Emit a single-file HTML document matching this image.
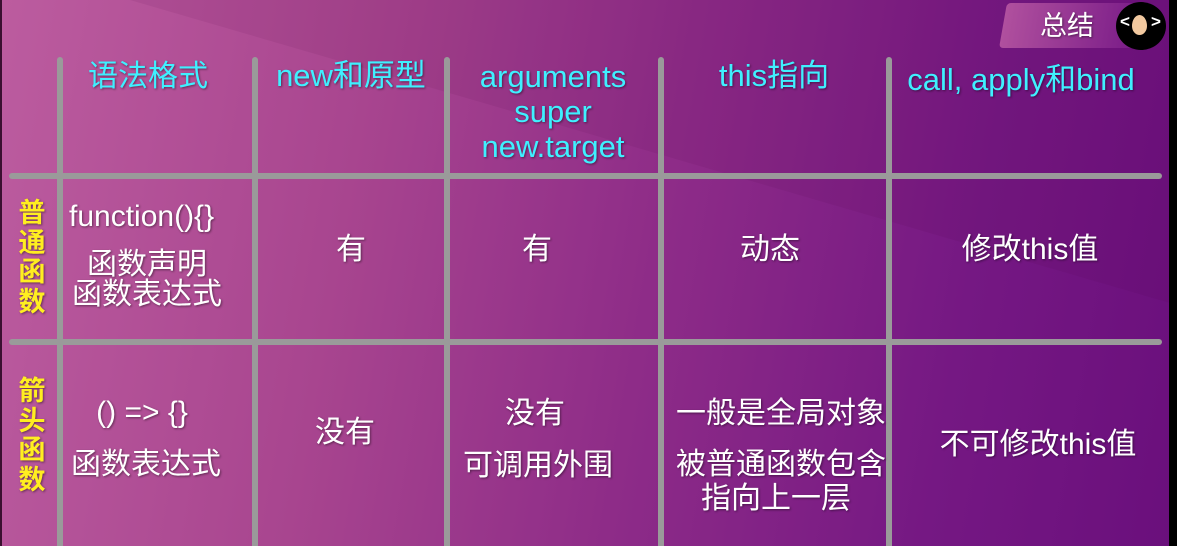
<!DOCTYPE html>
<html><head><meta charset="utf-8"><style>
html,body{margin:0;width:1177px;height:546px;overflow:hidden}
body{position:relative;font-family:"Liberation Sans","Noto Sans CJK SC",sans-serif;
background:linear-gradient(100deg,#bc5c9f 0%,#a8458f 30%,#8e2c88 55%,#751883 80%,#6a0f7c 100%);}
.v{position:absolute;top:57px;width:6px;height:489px;background:#9a9a9a;border-radius:3px 3px 0 0}
.h{position:absolute;left:9px;width:1153px;height:6px;background:#9a9a9a;border-radius:3px}
.t{position:absolute;color:#fff;font-size:30px;text-align:center;text-shadow:1px 1px 2px rgba(0,0,0,.45);line-height:36px;white-space:nowrap}
.c{color:#3ff0ff;font-size:31px}
.y{position:absolute;color:#ffee20;font-size:27px;font-weight:bold;width:30px;line-height:29.5px;text-align:center;text-shadow:1px 1px 2px rgba(0,0,0,.45)}
</style></head><body>
<svg style="position:absolute;left:0;top:0" width="1177" height="546"><polygon points="130,0 1177,0 1177,305" fill="rgba(80,0,70,0.08)"/></svg>
<div style="position:absolute;left:0;top:0;width:2px;height:546px;background:#3a1030"></div>
<div style="position:absolute;left:1169px;top:0;width:8px;height:546px;background:#000"></div>
<div style="position:absolute;left:1003px;top:3px;width:135px;height:45px;background:linear-gradient(90deg,#b0509e,#7a1c88);transform:skewX(-10deg);border-radius:4px"></div>
<div class="t" style="left:1040px;top:8px;font-size:27px">总结</div>
<div style="position:absolute;left:1116px;top:2px;width:50px;height:48px;border-radius:50%;background:#000"></div>
<div style="position:absolute;left:1120px;top:12px;color:#fff;font-size:17px;font-weight:bold">&lt;</div>
<div style="position:absolute;left:1151px;top:12px;color:#fff;font-size:17px;font-weight:bold">&gt;</div>
<div style="position:absolute;left:1132px;top:15px;width:15px;height:20px;border-radius:50%/55% 55% 45% 45%;background:#f2c9a0"></div>

<div class="v" style="left:57px"></div>
<div class="v" style="left:252px"></div>
<div class="v" style="left:444px"></div>
<div class="v" style="left:658px"></div>
<div class="v" style="left:886px"></div>
<div class="h" style="top:173px"></div>
<div class="h" style="top:339px"></div>

<div class="t c" style="left:48px;width:200px;top:59px;font-size:30px">语法格式</div>
<div class="t c" style="left:251px;width:200px;top:58px">new和原型</div>
<div class="t c" style="left:453px;width:200px;top:59px;line-height:35px">arguments<br>super<br>new.target</div>
<div class="t c" style="left:674px;width:200px;top:58px">this指向</div>
<div class="t c" style="left:871px;width:300px;top:62px">call, apply和bind</div>

<div class="y" style="left:17px;top:199px">普<br>通<br>函<br>数</div>
<div class="t" style="left:69px;top:199px;text-align:left">function(){}</div>
<div class="t" style="left:47px;width:200px;top:250px;line-height:30px">函数声明<br>函数表达式</div>
<div class="t" style="left:251px;width:200px;top:232px">有</div>
<div class="t" style="left:437px;width:200px;top:232px">有</div>
<div class="t" style="left:670px;width:200px;top:232px">动态</div>
<div class="t" style="left:880px;width:300px;top:232px">修改this值</div>

<div class="y" style="left:17px;top:377px">箭<br>头<br>函<br>数</div>
<div class="t" style="left:42px;width:200px;top:395px">() =&gt; {}</div>
<div class="t" style="left:46px;width:200px;top:447px">函数表达式</div>
<div class="t" style="left:245px;width:200px;top:415px">没有</div>
<div class="t" style="left:435px;width:200px;top:396px">没有</div>
<div class="t" style="left:438px;width:200px;top:448px">可调用外围</div>
<div class="t" style="left:676px;width:200px;top:396px">一般是全局对象</div>
<div class="t" style="left:676px;width:200px;top:448px;line-height:34px">被普通函数包含<br>指向上一层</div>
<div class="t" style="left:888px;width:300px;top:427px">不可修改this值</div>
</body></html>
